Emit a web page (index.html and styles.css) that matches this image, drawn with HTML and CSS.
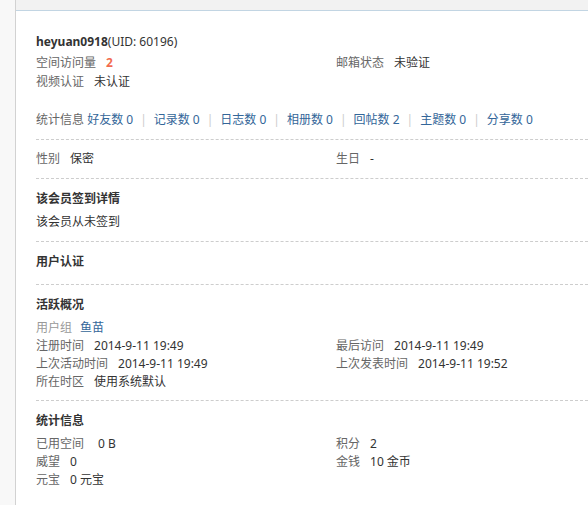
FILE: index.html
```
<!DOCTYPE html>
<html lang="zh-CN">
<head>
<meta charset="utf-8">
<title>个人资料</title>
<link rel="stylesheet" href="styles.css">
</head>
<body>
<div class="page">
  <div class="side"></div>
  <div class="main">
    <div class="topbar"></div>
    <div class="content">
      <div class="sec">
        <h2 class="title">heyuan0918<span class="uid">(UID: 60196)</span></h2>
        <ul class="pf pf-first">
          <li><em>空间访问量</em><strong class="red">2</strong></li>
          <li><em>邮箱状态</em>未验证</li>
          <li><em>视频认证</em>未认证</li>
        </ul>
        <div class="links">
          <em class="lbl">统计信息</em> <a href="#">好友数 0</a><span class="pipe">|</span><a href="#">记录数 0</a><span class="pipe">|</span><a href="#">日志数 0</a><span class="pipe">|</span><a href="#">相册数 0</a><span class="pipe">|</span><a href="#">回帖数 2</a><span class="pipe">|</span><a href="#">主题数 0</a><span class="pipe">|</span><a href="#">分享数 0</a>
        </div>
      </div>
      <div class="sec">
        <ul class="pf">
          <li><em>性别</em>保密</li>
          <li><em>生日</em>-</li>
        </ul>
      </div>
      <div class="sec">
        <h2 class="head">该会员签到详情</h2>
        <p class="line">该会员从未签到</p>
      </div>
      <div class="sec sec-empty">
        <h2 class="head">用户认证</h2>
      </div>
      <div class="sec sec-act">
        <h2 class="head">活跃概况</h2>
        <p class="line"><em class="grp">用户组</em><a href="#">鱼苗</a></p>
        <ul class="pf">
          <li><em>注册时间</em>2014-9-11 19:49</li>
          <li><em>最后访问</em>2014-9-11 19:49</li>
          <li><em>上次活动时间</em>2014-9-11 19:49</li>
          <li><em>上次发表时间</em>2014-9-11 19:52</li>
          <li><em>所在时区</em>使用系统默认</li>
        </ul>
      </div>
      <div class="sec sec-last">
        <h2 class="head">统计信息</h2>
        <ul class="pf">
          <li><em class="wide">已用空间</em>0 B</li>
          <li><em>积分</em>2</li>
          <li><em>威望</em>0</li>
          <li><em>金钱</em>10 金币</li>
          <li><em>元宝</em>0 元宝</li>
        </ul>
      </div>
    </div>
  </div>
</div>
</body>
</html>
```
FILE: styles.css
```
* { box-sizing: border-box; }
html, body { margin: 0; padding: 0; }
body {
  background: #fff;
  font-family: "Noto Sans", "Noto Sans CJK SC", sans-serif;
  font-size: 12px;
  line-height: 18px;
  color: #333;
  width: 588px;
  height: 505px;
  overflow: hidden;
}
.page { display: flex; height: 505px; }
.side { width: 15px; flex: none; background: #f8f8f8; }
.main {
  flex: 1;
  min-width: 0;
  border-left: 1px solid #d2d2d2;
  background: #fff;
  overflow: hidden;
}
.topbar {
  height: 11px;
  background: #f2f2f2;
  border-bottom: 1px solid #c2d5e3;
}
.content { padding: 20px 0 0 20px; }
.sec {
  border-bottom: 1px dashed #cdcdcd;
  padding-bottom: 10px;
  margin-bottom: 10px;
}
.sec-last { border-bottom: 0; }
.sec.sec-empty { padding-bottom: 8px; }
.sec.sec-act { padding-bottom: 9px; }
h2 { margin: 0; font-size: 12px; font-weight: bold; color: #333; }
.title { font-size: 12px; line-height: 21px; margin-bottom: 2px; }
.uid { font-weight: normal; }
.head { line-height: 19px; margin-bottom: 5px; }
ul.pf {
  list-style: none;
  margin: 0;
  padding: 0;
  display: grid;
  grid-template-columns: 300px 300px;
}
ul.pf-first { row-gap: 1px; margin-bottom: 20px; }
em { font-style: normal; color: #666; margin-right: 10px; }
.wide { margin-right: 14px; }
.red { color: #f26c4f; font-weight: bold; }
.line { margin: 0; }
.grp { color: #999; margin-right: 8px; }
a { color: #336699; text-decoration: none; }
.links { white-space: nowrap; }
.links .lbl { margin-right: 0; }
.pipe {
  display: inline-block;
  margin: 0 7px;
  color: #ccc;
}
```
